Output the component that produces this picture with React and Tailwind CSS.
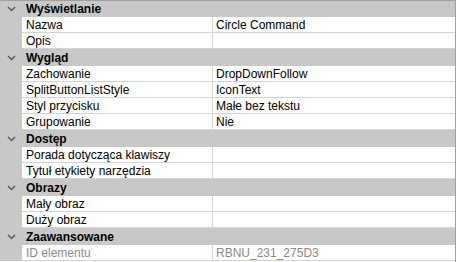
import React from "react";

const data = [
  { cat: "Wyświetlanie", items: [["Nazwa", "Circle Command"], ["Opis", ""]] },
  {
    cat: "Wygląd",
    items: [
      ["Zachowanie", "DropDownFollow"],
      ["SplitButtonListStyle", "IconText"],
      ["Styl przycisku", "Małe bez tekstu"],
      ["Grupowanie", "Nie"],
    ],
  },
  { cat: "Dostęp", items: [["Porada dotycząca klawiszy", ""], ["Tytuł etykiety narzędzia", ""]] },
  { cat: "Obrazy", items: [["Mały obraz", ""], ["Duży obraz", ""]] },
  { cat: "Zaawansowane", items: [["ID elementu", "RBNU_231_275D3", true]] },
];

function Chevron() {
  return (
    <svg width="9" height="6" viewBox="0 0 9 6" className="block">
      <path d="M1 1 L4.5 4.5 L8 1" fill="none" stroke="#5a5a5a" strokeWidth="1.5" />
    </svg>
  );
}

export default function App() {
  return (
    <div
      className="w-[456px] h-[262px] bg-white border-t border-r border-[#a0a0a0] overflow-hidden text-[12px] leading-none text-black"
      style={{ fontFamily: '"Liberation Sans", Arial, sans-serif' }}
    >
      {data.map((g, i) => (
        <div key={g.cat}>
          <div
            className={
              "flex items-center bg-[#c8c8c8] " + (i === 0 ? "h-[16px]" : "h-[17px]")
            }
          >
            <div className="w-[22px] flex justify-center pl-[1px]">
              <Chevron />
            </div>
            <div className="pl-[4px] font-bold">{g.cat}</div>
          </div>
          {g.items.map(([n, v, dis]) => (
            <div key={n} className="flex h-[16px]">
              <div className="w-[22px] bg-[#c8c8c8]" />
              <div
                className={
                  "w-[191px] border-b border-r border-[#d4d4d4] flex items-center pl-[4px] " +
                  (dis ? "text-[#8a8a8a]" : "text-black")
                }
              >
                {n}
              </div>
              <div
                className={
                  "flex-1 border-b border-[#d4d4d4] flex items-center pl-[3px] " +
                  (dis ? "text-[#8a8a8a]" : "text-black")
                }
              >
                {v}
              </div>
            </div>
          ))}
        </div>
      ))}
    </div>
  );
}
